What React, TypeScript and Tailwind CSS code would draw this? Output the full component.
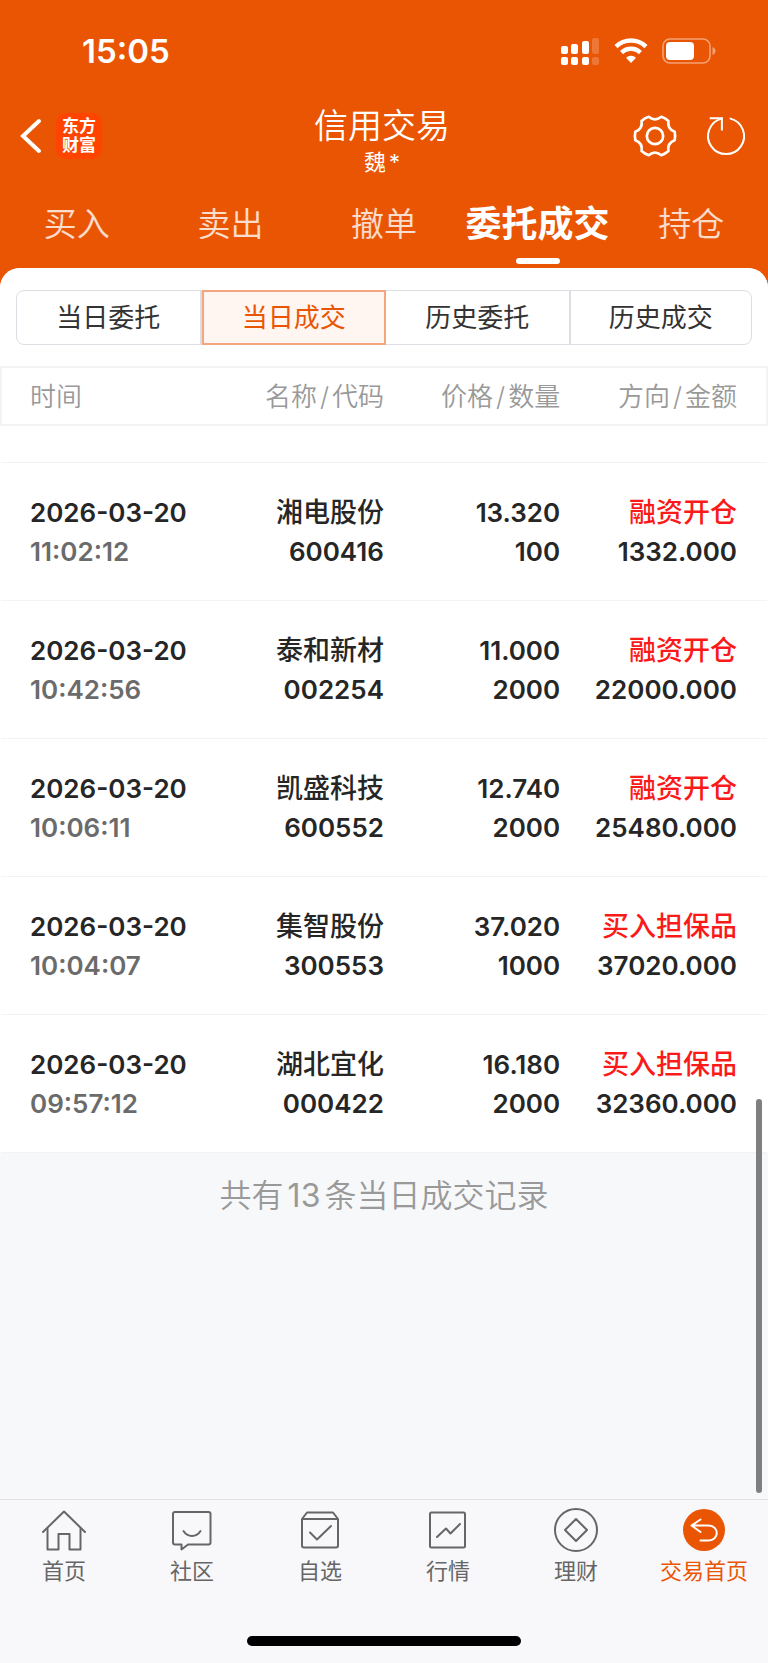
import React from 'react';

interface Deal {
  date: string;
  time: string;
  name: string;
  code: string;
  price: string;
  quantity: string;
  direction: string;
  amount: string;
}

const deals: Deal[] = [
  {
    date: '2026-03-20',
    time: '11:02:12',
    name: '湘电股份',
    code: '600416',
    price: '13.320',
    quantity: '100',
    direction: '融资开仓',
    amount: '1332.000',
  },
  {
    date: '2026-03-20',
    time: '10:42:56',
    name: '泰和新材',
    code: '002254',
    price: '11.000',
    quantity: '2000',
    direction: '融资开仓',
    amount: '22000.000',
  },
  {
    date: '2026-03-20',
    time: '10:06:11',
    name: '凯盛科技',
    code: '600552',
    price: '12.740',
    quantity: '2000',
    direction: '融资开仓',
    amount: '25480.000',
  },
  {
    date: '2026-03-20',
    time: '10:04:07',
    name: '集智股份',
    code: '300553',
    price: '37.020',
    quantity: '1000',
    direction: '买入担保品',
    amount: '37020.000',
  },
  {
    date: '2026-03-20',
    time: '09:57:12',
    name: '湖北宜化',
    code: '000422',
    price: '16.180',
    quantity: '2000',
    direction: '买入担保品',
    amount: '32360.000',
  },
];

const tabs = ['买入', '卖出', '撤单', '委托成交', '持仓'];
const filters = ['当日委托', '当日成交', '历史委托', '历史成交'];

const StatusBar: React.FC = () => (
  <div className="flex h-[94px] items-center justify-between pl-[82px] pr-[52px] pt-2">
    <span className="text-[33px] font-semibold leading-10">15:05</span>
    <div className="flex items-center gap-[14px]">
      <svg width="40" height="28" viewBox="0 0 40 28" fill="currentColor">
        <rect x="1" y="9" width="7" height="8" rx="2" />
        <rect x="11" y="7" width="7" height="10" rx="2" />
        <rect x="22" y="4" width="7" height="13" rx="2" />
        <rect x="32" y="1" width="7" height="16" rx="2" opacity="0.2" />
        <rect x="1" y="20" width="7" height="8" rx="2" />
        <rect x="11" y="20" width="7" height="8" rx="2" />
        <rect x="22" y="20" width="7" height="8" rx="2" />
        <rect x="32" y="20" width="7" height="8" rx="2" opacity="0.2" />
      </svg>
      <svg width="34" height="26" viewBox="0 0 34 26" fill="none" stroke="currentColor">
        <path d="M2 8.6a21.5 21.5 0 0 1 30 0" strokeWidth="4.4" />
        <path d="M7.6 14.6a13.4 13.4 0 0 1 18.8 0" strokeWidth="4.4" />
        <path d="M17 25l-5-5.2a7.2 7.2 0 0 1 10 0z" fill="currentColor" stroke="none" />
      </svg>
      <svg width="54" height="26" viewBox="0 0 54 26" fill="none">
        <rect x="1" y="1" width="47" height="24" rx="7" stroke="currentColor" strokeWidth="1.6" opacity="0.45" />
        <rect x="4" y="4" width="28" height="18" rx="4" fill="currentColor" />
        <path d="M50.500 9c4 1.500 4 6.500 0 8z" fill="currentColor" opacity="0.45" />
      </svg>
    </div>
  </div>
);

const TitleBar: React.FC = () => (
  <div className="grid h-[84px] grid-cols-[1fr_auto_1fr] items-center pl-4 pr-5">
    <div className="flex items-center gap-3">
      <button type="button" aria-label="返回">
        <svg width="28" height="40" viewBox="0 0 28 40" fill="none" stroke="currentColor" strokeWidth="4">
          <path d="M23 5L7 20l16 15" strokeLinecap="round" strokeLinejoin="miter" />
        </svg>
      </button>
      <span className="flex size-[46px] flex-col items-center justify-center rounded-[10px] bg-[#ff4400] text-[17px] font-bold leading-[19px]">
        <span>东方</span>
        <span>财富</span>
      </span>
    </div>
    <div className="pt-3 text-center">
      <h1 className="text-[34px] font-[350] leading-10">信用交易</h1>
      <p className="text-[22px] font-normal leading-8">
        魏<span className="ml-[3px]">*</span>
      </p>
    </div>
    <div className="flex items-center justify-end gap-[25px]">
      <button type="button" aria-label="设置">
        <svg width="48" height="48" viewBox="-25 -25 50 50" fill="none" stroke="currentColor" strokeWidth="2.8" strokeLinejoin="round">
          <path d="M20.500 -4.400Q21.400 0 20.500 4.400Q12.600 7.300 14 15.600Q10.700 18.600 6.500 20Q0 14.600 -6.500 20Q-10.700 18.600 -14 15.600Q-12.600 7.300 -20.500 4.400Q-21.400 0 -20.500 -4.400Q-12.600 -7.300 -14 -15.600Q-10.700 -18.600 -6.500 -20Q0 -14.600 6.500 -20Q10.700 -18.600 14 -15.600Q12.600 -7.300 20.500 -4.400Z" />
          <circle r="8.500" />
        </svg>
      </button>
      <button type="button" aria-label="刷新">
        <svg width="44" height="44" viewBox="0 0 44 44" fill="none" stroke="currentColor" strokeWidth="2">
          <path d="M26.500 4.600A18 18 0 1 1 17.600 4.600" strokeLinecap="round" />
          <path d="M5.700 4.200h12.200v12.200" />
        </svg>
      </button>
    </div>
  </div>
);

const TradeTabs: React.FC = () => (
  <nav className="grid grid-cols-5 pt-[22px]">
    {tabs.map(tab => {
      const active = tab === '委托成交';
      return (
        <button
          key={tab}
          type="button"
          className={
            active
              ? 'flex flex-col items-center whitespace-nowrap text-[36px] font-bold leading-[48px]'
              : 'flex flex-col items-center whitespace-nowrap text-[33px] font-[350] leading-[48px] text-white/80'
          }
        >
          {tab}
          {active && <span className="mt-[10px] h-[6px] w-11 rounded-full bg-white" />}
        </button>
      );
    })}
  </nav>
);

const FilterBar: React.FC = () => (
  <div className="mx-4 grid h-[55px] grid-cols-[46fr_46fr_46fr_45fr] rounded-lg border border-[#dcdee4]">
    {filters.map((filter, index) => {
      const active = filter === '当日成交';
      const divider = index < filters.length - 1 ? 'border-r-2 border-[#dcdee4]' : '';
      return (
        <button
          key={filter}
          type="button"
          className={
            active
              ? '-my-px border-2 border-[#f5a680] bg-[#fff5f1] text-[26px] text-[#ea5504]'
              : `${divider} text-[26px] text-[#333333]`
          }
        >
          {filter}
        </button>
      );
    })}
  </div>
);

const Slash: React.FC = () => <span className="mx-[3px]">/</span>;

const DealTable: React.FC = () => (
  <table className="mt-[21px] w-full table-fixed bg-white text-right text-[26px] leading-[39px]">
    <thead>
      <tr className="h-[58px] border-2 border-[#f3f3f4] text-[#999999]">
        <th className="w-[26%] pl-[28px] text-left font-[350]">时间</th>
        <th className="w-[24%] font-[350]">
          名称
          <Slash />
          代码
        </th>
        <th className="w-[23%] font-[350]">
          价格
          <Slash />
          数量
        </th>
        <th className="w-[27%] pr-[29px] font-[350]">
          方向
          <Slash />
          金额
        </th>
      </tr>
    </thead>
    <tbody className="font-semibold text-[#262626]">
      <tr className="h-[37px] border-b border-[#f3f3f4]" aria-hidden="true">
        <td colSpan={4} />
      </tr>
      {deals.map(deal => (
        <tr key={deal.code} className="h-[138px] border-b border-[#f3f3f4] align-top">
          <td className="pl-[29px] pt-[30px] text-left">
            <p>{deal.date}</p>
            <p className="text-[#6b6b6b]">{deal.time}</p>
          </td>
          <td className="pt-[30px]">
            <p className="text-[27px] font-medium">{deal.name}</p>
            <p>{deal.code}</p>
          </td>
          <td className="pt-[30px]">
            <p>{deal.price}</p>
            <p>{deal.quantity}</p>
          </td>
          <td className="pr-[30px] pt-[30px]">
            <p className="text-[27px] font-medium text-[#fb1a1a]">{deal.direction}</p>
            <p>{deal.amount}</p>
          </td>
        </tr>
      ))}
    </tbody>
  </table>
);

interface NavItem {
  label: string;
  icon: React.ReactNode;
  active?: boolean;
}

const navItems: NavItem[] = [
  {
    label: '首页',
    icon: (
      <>
        <path d="M1 24L22 3.500L43 24" />
        <path d="M5.500 20.500V41.500H16.500V26H27.500V41.500H38.500V20.500" />
      </>
    ),
  },
  {
    label: '社区',
    icon: (
      <>
        <path d="M5 4H38.500a2 2 0 0 1 2 2V34.500a2 2 0 0 1-2 2H18L11.500 41.500V36.500H5a2 2 0 0 1-2-2V6a2 2 0 0 1 2-2z" />
        <path d="M13.500 23c4 6.500 13 6.500 17 0" />
      </>
    ),
  },
  {
    label: '自选',
    icon: (
      <>
        <path d="M4 11L9 4.500H35L40 11V37.500a2 2 0 0 1-2 2H6a2 2 0 0 1-2-2zM4 11H40" />
        <path d="M12 24.500L19 31.500L33 18" />
      </>
    ),
  },
  {
    label: '行情',
    icon: (
      <>
        <rect x="4" y="4.500" width="35" height="35" rx="1.500" />
        <path d="M11 29L20 20.500L24.500 25.500L34 16" />
      </>
    ),
  },
  {
    label: '理财',
    icon: (
      <>
        <circle cx="22" cy="22" r="21" />
        <path d="M22 11L33 22L22 33L11 22Z" />
      </>
    ),
  },
  {
    label: '交易首页',
    active: true,
    icon: (
      <>
        <circle cx="22" cy="22" r="21" fill="#ea5504" stroke="none" />
        <path d="M18.500 11.500L9.500 17.500L18.500 24M10 17.500H26.500c11 0 11 15 0 15H18.500" stroke="#ffffff" />
      </>
    ),
  },
];

const BottomNav: React.FC = () => (
  <footer className="border-t border-[#dfdfe2] bg-[#f8f8fa] pt-2">
    <nav className="grid grid-cols-6">
      {navItems.map(item => (
        <a
          key={item.label}
          href="#"
          className={
            item.active
              ? 'flex flex-col items-center gap-[3px] whitespace-nowrap text-[22px] leading-8 text-[#ea5504]'
              : 'flex flex-col items-center gap-[3px] whitespace-nowrap text-[22px] leading-8 text-[#666666]'
          }
        >
          <svg
            width="44"
            height="44"
            viewBox="0 0 44 44"
            fill="none"
            stroke="currentColor"
            strokeWidth="2"
            strokeLinecap="round"
            strokeLinejoin="round"
          >
            {item.icon}
          </svg>
          {item.label}
        </a>
      ))}
    </nav>
    <div className="mx-auto mb-[17px] mt-[49px] h-[10px] w-[274px] rounded-full bg-black" />
  </footer>
);

const App: React.FC = () => {
  return (
    <div
      lang="zh-CN"
      className="flex min-h-screen flex-col bg-[#ea5504] font-['Inter','Noto_Sans_CJK_SC',sans-serif]"
    >
      <header className="text-white">
        <StatusBar />
        <TitleBar />
        <TradeTabs />
      </header>
      <main className="relative mt-1 flex flex-1 flex-col overflow-hidden rounded-t-[20px] bg-[#f7f8fa]">
        <div className="bg-white pt-[22px]">
          <FilterBar />
          <DealTable />
        </div>
        <p className="pt-[23px] text-center text-[32px] font-[350] leading-10 text-[#999999]">
          共有<span className="mx-1 font-normal">13</span>条当日成交记录
        </p>
        <div className="absolute bottom-[6px] right-[6px] h-[32%] w-[6px] rounded-full bg-[#7f7f80]" />
      </main>
      <BottomNav />
    </div>
  );
};

export default App;
